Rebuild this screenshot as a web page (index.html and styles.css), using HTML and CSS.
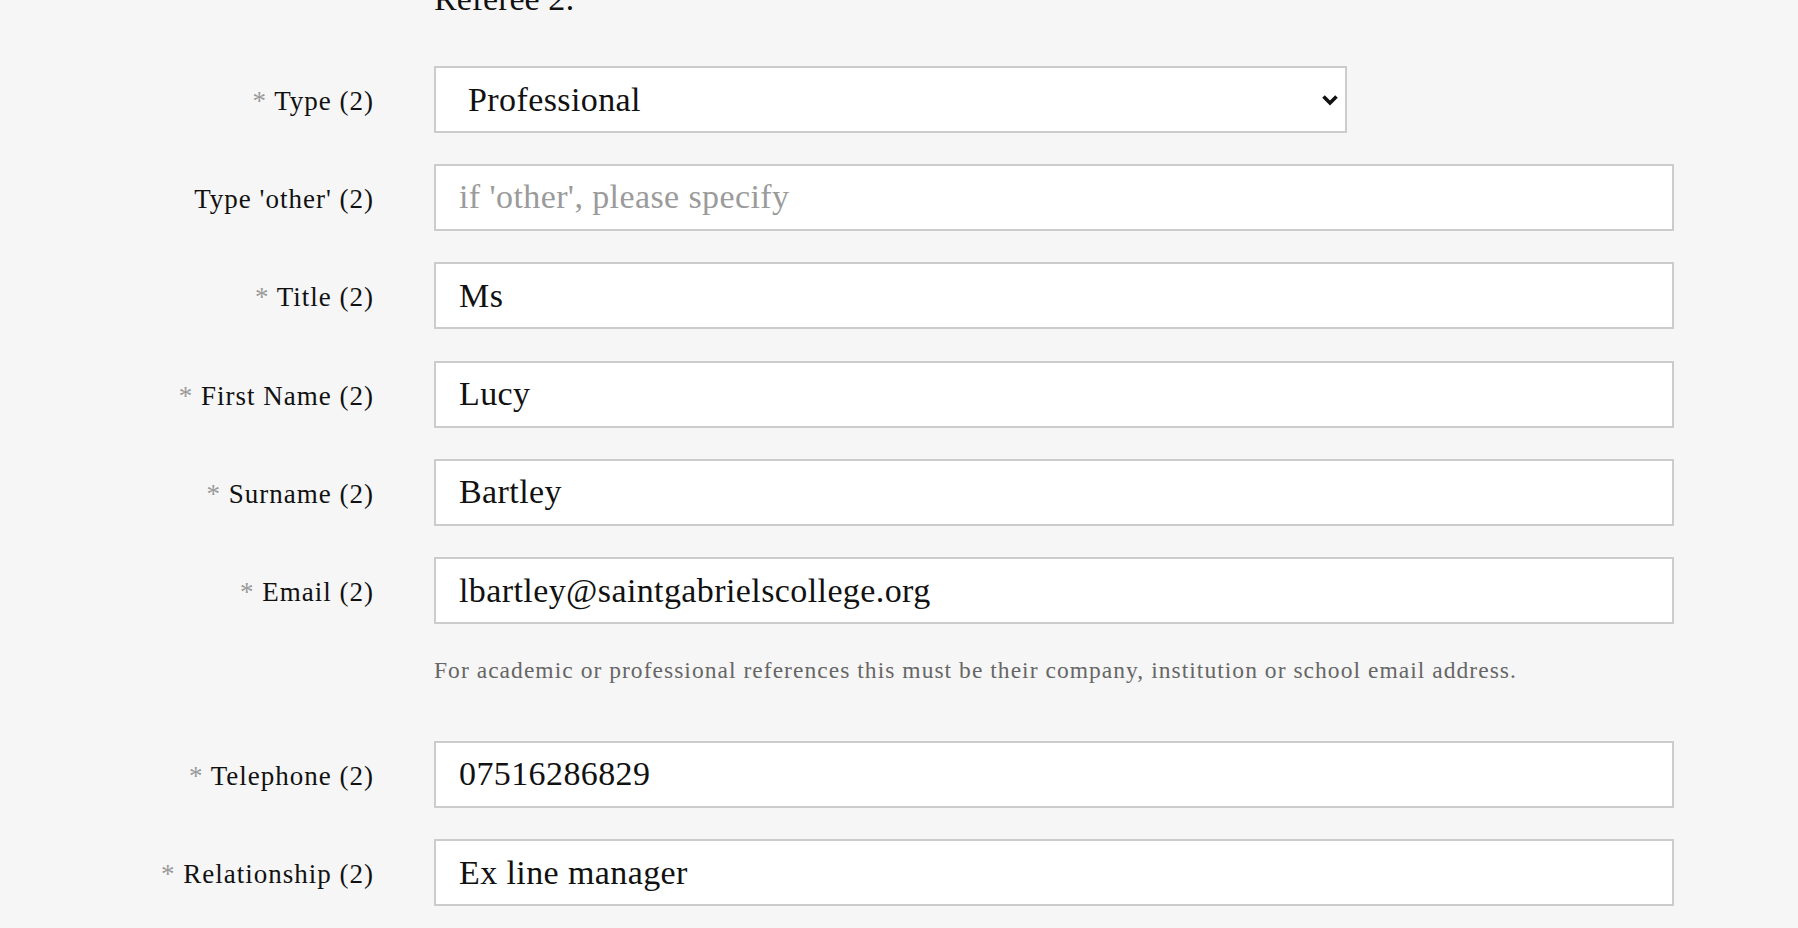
FILE: index.html
```html
<!DOCTYPE html>
<html lang="en">
<head>
<meta charset="utf-8">
<title>Referee 2</title>
<link rel="stylesheet" href="styles.css">
</head>
<body>
<main class="form">
  <h2 class="heading">Referee 2:</h2>

  <div class="row">
    <label class="label"><span class="req">*</span> Type (2)</label>
    <div class="select-wrap">
      <select class="select">
        <option>Professional</option>
      </select>
      <svg class="chevron" width="18" height="12" viewBox="0 0 18 12" aria-hidden="true">
        <path d="M2.5 2.5 L9 9 L15.5 2.5" fill="none" stroke="#111" stroke-width="3.6" stroke-linejoin="miter"/>
      </svg>
    </div>
  </div>

  <div class="row">
    <label class="label">Type 'other' (2)</label>
    <input class="input" type="text" placeholder="if 'other', please specify">
  </div>

  <div class="row">
    <label class="label"><span class="req">*</span> Title (2)</label>
    <input class="input" type="text" value="Ms">
  </div>

  <div class="row">
    <label class="label"><span class="req">*</span> First Name (2)</label>
    <input class="input" type="text" value="Lucy">
  </div>

  <div class="row">
    <label class="label"><span class="req">*</span> Surname (2)</label>
    <input class="input" type="text" value="Bartley">
  </div>

  <div class="row">
    <label class="label"><span class="req">*</span> Email (2)</label>
    <input class="input" type="text" value="lbartley@saintgabrielscollege.org">
  </div>

  <p class="hint">For academic or professional references this must be their company, institution or school email address.</p>

  <div class="row">
    <label class="label"><span class="req">*</span> Telephone (2)</label>
    <input class="input" type="text" value="07516286829">
  </div>

  <div class="row">
    <label class="label"><span class="req">*</span> Relationship (2)</label>
    <input class="input" type="text" value="Ex line manager">
  </div>
</main>
</body>
</html>
```

FILE: styles.css
```css
html, body {
  margin: 0;
  padding: 0;
  background: #f6f6f6;
  height: 100%;
  overflow: hidden;
}

body {
  font-family: "Liberation Serif", "Times New Roman", serif;
  color: #111;
}

.form {
  display: flex;
  flex-direction: column;
  gap: 31.3px;
}

.heading {
  margin: -18.5px 0 18.9px 434px;
  font-size: 34px;
  line-height: 34px;
  font-weight: normal;
  color: #111;
}

.row {
  display: flex;
  align-items: center;
  gap: 60px;
}

.label {
  width: 374px;
  flex: none;
  text-align: right;
  font-size: 27px;
  line-height: 34px;
  padding-top: 3px;
  letter-spacing: 1px;
  color: #111;
  white-space: nowrap;
}

.req {
  color: #9a9a9a;
}

.input,
.select {
  box-sizing: border-box;
  height: 67px;
  border: 2px solid #cccccc;
  border-radius: 0;
  background: #ffffff;
  font-family: "Liberation Serif", "Times New Roman", serif;
  font-size: 34px;
  letter-spacing: 0.4px;
  color: #111;
  outline: none;
  margin: 0;
}

.input {
  width: 1240px;
  padding: 0 20px 0 23px;
}

.input::placeholder {
  color: #9b9b9b;
  opacity: 1;
}

.select-wrap {
  position: relative;
  width: 913px;
  flex: none;
}

.select {
  width: 100%;
  display: block;
  appearance: none;
  -webkit-appearance: none;
  padding: 0 40px 0 32px;
}

.chevron {
  position: absolute;
  right: 8px;
  top: 50%;
  margin-top: -5px;
  pointer-events: none;
}

.hint {
  margin: 0 0 24.2px 434px;
  font-size: 23.5px;
  line-height: 30px;
  letter-spacing: 1.04px;
  color: #666666;
  white-space: nowrap;
}
```
